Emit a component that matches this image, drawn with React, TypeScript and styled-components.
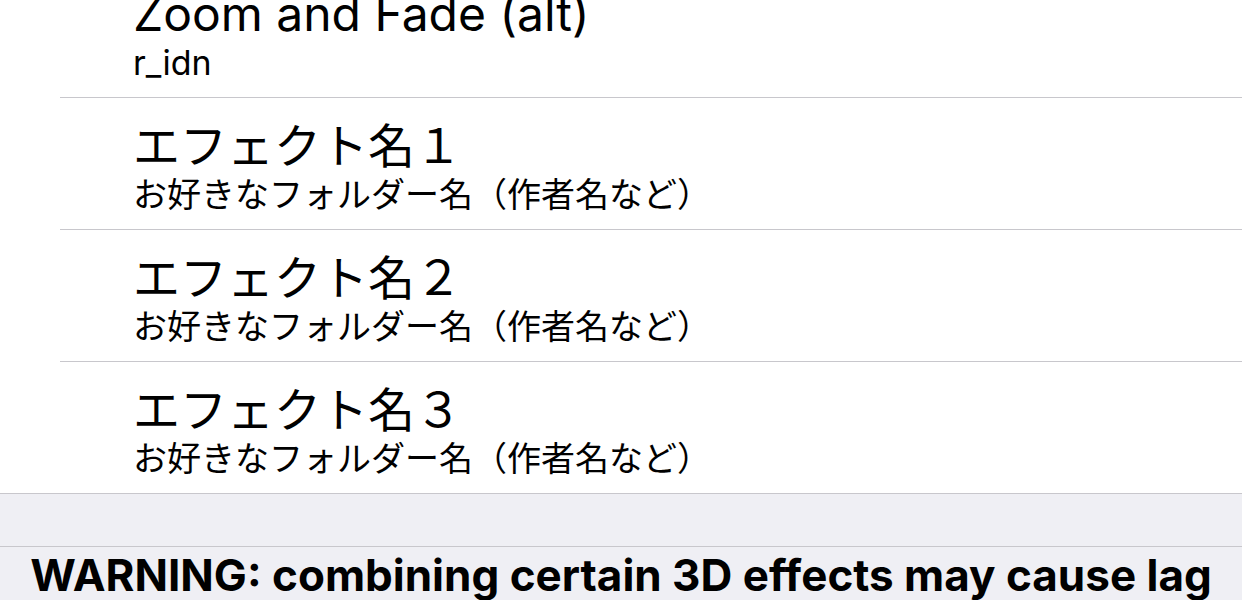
import { createGlobalStyle, styled } from "styled-components";

const GlobalStyle = createGlobalStyle`
  html, body {
    margin: 0;
    padding: 0;
    background: #efeff4;
    font-family: Inter, "Noto Sans CJK JP", sans-serif;
    color: #000;
    overflow: hidden;
  }
`;

const Screen = styled.div`
  width: 1242px;
  height: 600px;
  overflow: hidden;
  background: #efeff4;
`;

// list is scrolled so the first row is partly hidden
const List = styled.div`
  margin-top: -34px;
  background: #fff;
`;

// the last row's separator runs the full width
const Row = styled.div<{ $last?: boolean }>`
  height: 132px;
  box-sizing: border-box;
  margin-left: ${(p) => (p.$last ? 0 : 60)}px;
  padding: 22px 0 0 ${(p) => (p.$last ? 133 : 73)}px;
  border-bottom: 1px solid #c8c7cc;
`;

const Title = styled.div<{ $latin?: boolean }>`
  font-size: ${(p) => (p.$latin ? 48 : 47)}px;
  line-height: 52px;
  white-space: nowrap;
`;

const Subtitle = styled.div`
  font-size: 34px;
  line-height: 46px;
  white-space: nowrap;
`;

const Spacer = styled.div`
  height: 52px;
  border-bottom: 1px solid #c8c7cc;
`;

const Warning = styled.div`
  text-align: center;
  font-size: 44px;
  font-weight: 700;
  line-height: 52px;
  padding-top: 2px;
  white-space: nowrap;
`;

const effects = [
  { name: "Zoom and Fade (alt)", author: "r_idn", latin: true },
  { name: "エフェクト名１", author: "お好きなフォルダー名（作者名など）" },
  { name: "エフェクト名２", author: "お好きなフォルダー名（作者名など）" },
  { name: "エフェクト名３", author: "お好きなフォルダー名（作者名など）" },
];

export default function App() {
  return (
    <Screen>
      <GlobalStyle />
      <List>
        {effects.map((e, i) => (
          <Row key={i} $last={i === effects.length - 1}>
            <Title $latin={e.latin}>{e.name}</Title>
            <Subtitle>{e.author}</Subtitle>
          </Row>
        ))}
      </List>
      <Spacer />
      <Warning>WARNING: combining certain 3D effects may cause lag</Warning>
    </Screen>
  );
}
